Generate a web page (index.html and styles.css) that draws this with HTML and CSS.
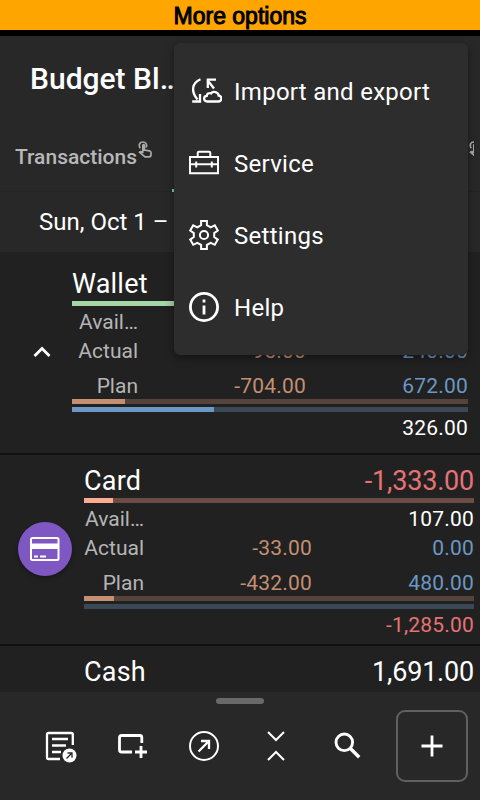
FILE: index.html
```html
<!DOCTYPE html>
<html lang="en">
<head>
<meta charset="utf-8">
<title>Budget</title>
<link rel="stylesheet" href="styles.css">
</head>
<body>
<div class="screen">
  <div class="banner">More options</div>
  <header class="header">
    <h1 class="title">Budget Bl…</h1>
    <nav class="tabs">
      <span class="tab">Transactions</span>
      <svg class="hand" viewBox="0 0 14 18"><path d="M2.200 7.200C.2 4 1.700 1 4.800 1S9.300 3.500 8.200 6.500M4.800 12V4.500q0-1 .8-1t.8 1V9l5 .8q1.600.3 1.600 1.800v2.200q0 2-2 2H7L1.500 11.200q1-1.200 3.300.5"/></svg>
      <span class="indicator"></span>
      <span class="clip"><svg class="hand" viewBox="0 0 14 18"><path d="M2.200 7.200C.2 4 1.700 1 4.800 1S9.300 3.500 8.200 6.500M4.800 12V4.500q0-1 .8-1t.8 1V9l5 .8q1.600.3 1.600 1.800v2.200q0 2-2 2H7L1.500 11.200q1-1.200 3.300.5"/></svg></span>
    </nav>
  </header>
  <div class="date">Sun, Oct 1 –</div>
  <main class="list">
    <section class="account wallet">
      <div class="side"><svg width="18" height="12" viewBox="0 0 18 12" class="line thick"><path d="M1.500 10 9 2.500 16.500 10"/></svg></div>
      <div class="body">
        <div class="name"><span>Wallet</span></div>
        <div class="bar green"></div>
        <div class="row first"><span class="label">Avail…</span></div>
        <div class="row"><span class="label">Actual</span><span class="out">-95.00</span><span class="in">240.00</span></div>
        <div class="row plan"><span class="label">Plan</span><span class="out">-704.00</span><span class="in">672.00</span></div>
        <div class="bar brown"><i style="width:53px"></i></div>
        <div class="bar blue"><i style="width:142px"></i></div>
        <div class="total">326.00</div>
      </div>
    </section>
    <section class="account card">
      <div class="side"><div class="badge"><svg width="30" height="24" viewBox="0 0 30 24"><rect x="1" y="1" width="27.500" height="22" rx="1.500" fill="none" stroke="#fff" stroke-width="2"/><path d="M1 6.500h28v5.500H1z" fill="#fff"/><path d="M4 19.500h4M10 19.500h6" stroke="#fff" stroke-width="2"/></svg></div></div>
      <div class="body">
        <div class="name"><span>Card</span><span class="amount neg">-1,333.00</span></div>
        <div class="bar coral"><i style="width:29px"></i></div>
        <div class="row first"><span class="label">Avail…</span><span></span><span>107.00</span></div>
        <div class="row"><span class="label">Actual</span><span class="out">-33.00</span><span class="in">0.00</span></div>
        <div class="row plan"><span class="label">Plan</span><span class="out">-432.00</span><span class="in">480.00</span></div>
        <div class="bar brown"><i style="width:30px"></i></div>
        <div class="bar blue"></div>
        <div class="total neg">-1,285.00</div>
      </div>
    </section>
    <section class="account cash">
      <div class="side"></div>
      <div class="body"><div class="name"><span>Cash</span><span class="amount">1,691.00</span></div></div>
    </section>
  </main>
  <footer class="bottom">
    <div class="handle"></div>
    <div class="tools">
      <span class="tool"><svg width="36" height="36" viewBox="0 0 36 36" class="line"><path d="M18 31H6.500Q5 31 5 29.500V6.500Q5 5 6.500 5h22.800Q30.800 5 30.800 6.500V17M10 11h16M10 17.500h14M10 24h9" stroke-width="2.300"/><circle cx="27.500" cy="27.500" r="7" fill="#fff" stroke="none"/><path d="M24.500 30.500 30 25M25.500 25H30v4.700" stroke="#282828" stroke-width="1.300"/></svg></span>
      <span class="tool"><svg width="36" height="36" viewBox="0 0 36 36" class="line thick"><path d="M18 24H7.500Q5.500 24 5.500 22V9.500q0-2 2-2h18.300q2 0 2 2V15M27 18v12M21 24h12"/></svg></span>
      <span class="tool"><svg width="36" height="36" viewBox="0 0 36 36" class="line"><circle cx="18" cy="18" r="14"/><path d="M12.500 23.500 22.500 13.500M15 13h8v8" stroke-width="2.300"/></svg></span>
      <span class="tool"><svg width="36" height="36" viewBox="0 0 36 36" class="line"><path d="M10 4l8 8 8-8M10 32l8-8 8 8"/></svg></span>
      <span class="tool"><svg width="36" height="36" viewBox="0 0 36 36" class="line"><circle cx="14.300" cy="14.300" r="8.300" stroke-width="2.900"/><path d="M20.200 20.200 29.200 29.200" stroke-width="3.400"/></svg></span>
      <span class="add"><svg width="36" height="36" viewBox="0 0 36 36" class="line thick"><path d="M18 7.500v21M7.500 18h21"/></svg></span>
    </div>
  </footer>
  <div class="menu">
    <div class="item"><svg width="36" height="36" viewBox="0 0 36 36" class="line heavy"><path d="M14.500 6.300C6 10 4.500 18 11.500 26.500M6.200 28.500H14v-7.500M28 15.500 22.500 8.500M21.800 15V6.700H30"/><path d="M21.200 28.500h11a3 3 0 0 0 .4-6c0-3.500-6-4.800-7.300-2.200-2.600-.8-4.500.7-4.500 2.500-3.700.3-3.500 5.700.4 5.700z"/></svg><span>Import and export</span></div>
    <div class="item"><svg width="36" height="36" viewBox="0 0 36 36" class="line"><path d="M4 12h28v16.300H4zM11.700 12V8q0-1.200 1.200-1.200h10.200q1.200 0 1.200 1.200v4M4 19.300h28M10.200 16.500v6M25.800 16.500v6"/></svg><span>Service</span></div>
    <div class="item"><svg width="36" height="36" viewBox="0 0 36 36" class="line"><path d="M15.100 4h5.800v4.200l3.800 2.200 4.100-2 3 5.100-3.600 2.600v4l3.600 2.500-3 5.200-4.100-2-3.800 2.100V32h-5.800v-4.100l-3.800-2.100-4.100 2-3-5.200 3.600-2.500v-4l-3.600-2.600 3-5.100 4.100 2 3.800-2.200z"/><circle cx="18" cy="18" r="4.100"/></svg><span>Settings</span></div>
    <div class="item"><svg width="36" height="36" viewBox="0 0 36 36" class="line thick"><circle cx="18" cy="18" r="13.600"/><path d="M18 16.500v9M18 10.500v3"/></svg><span>Help</span></div>
  </div>
</div>
</body>
</html>
```

FILE: styles.css
```css
* { box-sizing: border-box; }
body { margin: 0; background: #212121; color: #fff; font-family: Roboto, sans-serif; }
.screen { position: relative; width: 480px; height: 800px; overflow: hidden; display: flex; flex-direction: column; }
.banner { height: 36px; flex: none; background: #ffa500; border-bottom: 6px solid #000; color: #000; text-align: center; font: 23px/32px "Liberation Sans", sans-serif; -webkit-text-stroke: 1px #000; }
.header { height: 156px; flex: none; background: #282828; border-bottom: 1px solid #242424; }
.title { margin: 0; height: 84px; padding-left: 30px; font-size: 30px; line-height: 85px; font-weight: 500; white-space: nowrap; }
.tabs { display: flex; height: 72px; padding-left: 15px; color: #b8b8b8; }
.tab { width: 123px; font-size: 21px; line-height: 75px; font-weight: 500; white-space: nowrap; }
.hand { width: 14px; height: 18px; margin-top: 21px; flex: none; fill: none; stroke: #aaa; stroke-width: 1.700; }
.indicator { width: 296px; height: 3px; flex: none; margin: 69px 1px 0 20px; background: #80cbc4; }
.clip { display: flex; width: 5px; overflow: hidden; }
.date { height: 60px; flex: none; padding-left: 39px; background: #282828; font-size: 24px; line-height: 60px; }
.list { flex: 1; min-height: 0; overflow: hidden; }
.account { display: flex; height: 191px; border-bottom: 2px solid #101010; }
.wallet { height: 203px; padding: 6px 12px 6px 0; }
.card, .cash { padding-right: 6px; }
.side { width: 84px; flex: none; display: flex; align-items: center; justify-content: center; padding-bottom: 2px; }
.wallet .side { width: 72px; padding: 0 0 2px 12px; }
.card .side { padding-left: 6px; }
.badge { width: 54px; height: 54px; border-radius: 50%; background: #7e57c2; display: flex; align-items: center; justify-content: center; box-shadow: 0 2px 4px #0005; }
.body { flex: 1; }
.name { display: flex; justify-content: space-between; height: 43px; padding-top: 10px; font-size: 27px; line-height: 33px; letter-spacing: .2px; }
.amount { letter-spacing: -.2px; }
.bar { height: 5px; }
.bar i { display: block; height: 5px; }
.green { background: #a5d6a7; }
.brown { background: #54443b; }
.brown i { background: #c58f72; }
.blue { margin-top: 3px; background: #3b4855; }
.blue i { background: #6b98c4; }
.coral { background: #6b4d46; }
.coral i { background: #ffab91; }
.row { display: grid; grid-template-columns: 66px 168px 162px; height: 29px; font-size: 21px; line-height: 29px; letter-spacing: .2px; text-align: right; }
.card .row { grid-template-columns: 60px 168px 162px; }
.first { margin-top: 2px; }
.plan { height: 27px; line-height: 29px; margin-top: 6px; }
.label { color: #b5b5b5; letter-spacing: 0; }
.out { color: #c58f72; }
.in { color: #6b98c4; }
.neg { color: #e57373; }
.total { margin-top: 2px; text-align: right; font-size: 21px; line-height: 29px; letter-spacing: .2px; }
.bottom { height: 108px; flex: none; background: #282828; padding-top: 6px; }
.handle { width: 48px; height: 6px; margin: 0 auto; border-radius: 3px; background: #696969; }
.tools { display: flex; align-items: center; margin: 6px 12px 0 24px; }
.tool { width: 72px; height: 72px; display: flex; align-items: center; justify-content: center; }
.add { width: 72px; height: 72px; margin-left: 12px; border: 2px solid #606060; border-radius: 9px; display: flex; align-items: center; justify-content: center; }
.menu { position: absolute; left: 174px; top: 43px; width: 294px; height: 312px; padding: 12px 0; border-radius: 6px; background: #2d2d2d; box-shadow: 0 3px 10px #0006; }
.item { display: flex; align-items: center; gap: 12px; height: 72px; padding-left: 12px; font-size: 24px; letter-spacing: .28px; }
.item span { padding-top: 2px; }
.line { fill: none; stroke: #fff; stroke-width: 2; }
.thick { stroke-width: 2.800; }
.heavy { stroke-width: 2.300; }
```
